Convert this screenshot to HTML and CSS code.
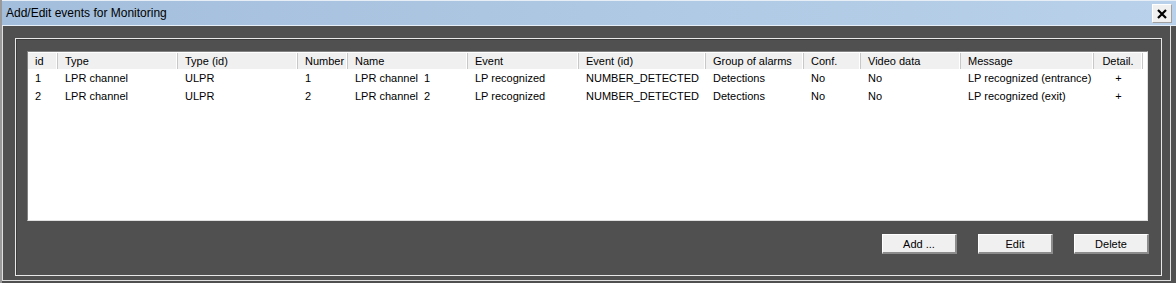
FILE: index.html
```html
<!DOCTYPE html>
<html>
<head>
<meta charset="utf-8">
<link rel="stylesheet" href="styles.css">
</head>
<body>
<div class="window">
  <div class="titlebar">
    <span class="title">Add/Edit events for Monitoring</span>
    <span class="close">
      <svg width="12" height="12" viewBox="0 0 12 12"><path d="M2 2 L10 10 M10 2 L2 10" stroke="#000" stroke-width="2.2" fill="none"/></svg>
    </span>
  </div>
  <div class="frame">
    <div class="group">
      <div class="list">
        <div class="row header">
          <div class="c">id</div>
          <div class="c">Type</div>
          <div class="c">Type (id)</div>
          <div class="c">Number</div>
          <div class="c">Name</div>
          <div class="c">Event</div>
          <div class="c">Event (id)</div>
          <div class="c">Group of alarms</div>
          <div class="c">Conf.</div>
          <div class="c">Video data</div>
          <div class="c">Message</div>
          <div class="c center">Detail.</div>
        </div>
        <div class="row">
          <div class="c">1</div>
          <div class="c">LPR channel</div>
          <div class="c">ULPR</div>
          <div class="c">1</div>
          <div class="c">LPR channel&nbsp; 1</div>
          <div class="c">LP recognized</div>
          <div class="c">NUMBER_DETECTED</div>
          <div class="c">Detections</div>
          <div class="c">No</div>
          <div class="c">No</div>
          <div class="c">LP recognized (entrance)</div>
          <div class="c center">+</div>
        </div>
        <div class="row">
          <div class="c">2</div>
          <div class="c">LPR channel</div>
          <div class="c">ULPR</div>
          <div class="c">2</div>
          <div class="c">LPR channel&nbsp; 2</div>
          <div class="c">LP recognized</div>
          <div class="c">NUMBER_DETECTED</div>
          <div class="c">Detections</div>
          <div class="c">No</div>
          <div class="c">No</div>
          <div class="c">LP recognized (exit)</div>
          <div class="c center">+</div>
        </div>
      </div>
      <div class="buttons">
        <button class="btn">Add ...</button>
        <button class="btn">Edit</button>
        <button class="btn">Delete</button>
      </div>
    </div>
  </div>
</div>
</body>
</html>
```
FILE: styles.css
```css
html, body {
  margin: 0;
  padding: 0;
  background: #505050;
}
body {
  width: 1176px;
  height: 283px;
  overflow: hidden;
  font-family: "Liberation Sans", Arial, sans-serif;
  font-size: 11px;
  color: #000;
}
.window {
  width: 1176px;
  height: 283px;
  background: #505050;
  box-sizing: border-box;
  border-left: 2px solid #9a9a9a;
  display: flex;
  flex-direction: column;
}
.titlebar {
  height: 25px;
  flex: none;
  border-top: 1px solid #e8eef6;
  border-bottom: 1px solid #e6eef8;
  box-sizing: border-box;
  height: 26px;
  background: linear-gradient(to right, #a3bedc, #b9d1ea);
  display: flex;
  align-items: center;
  justify-content: space-between;
  padding: 0 4px 0 4px;
}
.title {
  font-size: 12px;
  color: #000;
}
.close {
  width: 18px;
  height: 17px;
  background: #f0f0f0;
  border: 1px solid #a0a0a0;
  border-top-color: #fff;
  border-left-color: #fff;
  display: flex;
  align-items: center;
  justify-content: center;
  margin-top: 1px;
}
.frame {
  flex: 1;
  box-sizing: border-box;
  border-left: 1px solid #e0e0e0;
  border-right: 1px solid #e0e0e0;
  border-bottom: 1px solid #e0e0e0;
  margin-right: 5px;
  margin-bottom: 2px;
  padding: 12px 0 0 12px;
}
.group {
  width: 1147px;
  height: 238px;
  box-sizing: border-box;
  border: 1px solid #e8e8e8;
  box-shadow: inset 1px 1px 0 #3c3c3c;
  padding: 12px 12px 0 11px;
}
.list {
  width: 1121px;
  height: 170px;
  box-sizing: border-box;
  background: #fff;
  border: 1px solid #828282;
  border-right-color: #e0e0e0;
  border-bottom-color: #e0e0e0;
}
.row {
  display: grid;
  grid-template-columns: 30px 120px 120px 50px 120px 111px 127px 98px 57px 100px 133px 49px;
  height: 18px;
  line-height: 18px;
}
.row .c {
  padding-left: 7px;
  white-space: nowrap;
  overflow: hidden;
}
.row .c.center {
  padding-left: 0;
  text-align: center;
}
.header {
  width: 1115px;
  height: 17px;
  line-height: 16px;
  background: #f0f0f0;
  border-top: 1px solid #fff;
  box-sizing: border-box;
}
.header .c {
  border-right: 1px solid #c8c8c8;
  box-shadow: inset -1px 0 0 #ffffff;
}
.header + .row {
  margin-top: 0;
}
.buttons {
  display: flex;
  justify-content: flex-end;
  gap: 21px;
  margin-top: 13px;
  padding-right: 0;
}
.btn {
  width: 75px;
  height: 20px;
  box-sizing: border-box;
  background: #f0f0f0;
  border: 1px solid #fff;
  border-right: 2px solid #8c8c8c;
  border-bottom: 2px solid #8c8c8c;
  font-family: "Liberation Sans", Arial, sans-serif;
  font-size: 11px;
  color: #000;
  padding: 0;
  margin: 0;
}
```
